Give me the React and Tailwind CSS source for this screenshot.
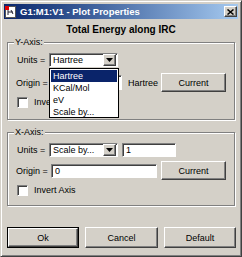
import React from 'react';

const raised =
  'bg-[#d4d0c8] border border-t-white border-l-white border-r-[#404040] border-b-[#404040] shadow-[inset_-1px_-1px_0_#808080]';
const sunken =
  'bg-white border border-t-[#808080] border-l-[#808080] border-r-white border-b-white shadow-[inset_1px_1px_0_#404040]';

const Arrow = () => (
  <div className={`${raised} shrink-0 w-[13px] h-[12px] flex items-center justify-center`}>
    <svg width="7" height="4" viewBox="0 0 7 4">
      <path d="M0 0h7L3.5 4z" fill="#000" />
    </svg>
  </div>
);

const Combo = ({ value, className = '' }) => (
  <div className={`${sunken} shrink-0 h-[14px] flex items-center justify-between pl-[3px] pr-px ${className}`}>
    <span className="leading-none whitespace-nowrap">{value}</span>
    <Arrow />
  </div>
);

const Button = ({ children, className = '' }) => (
  <div className={`${raised} shrink-0 flex items-center justify-center ${className}`}>{children}</div>
);

const Checkbox = ({ label }) => (
  <div className="flex items-center">
    <div className={`${sunken} shrink-0 w-[11px] h-[11px]`} />
    <span className="ml-[6px] whitespace-nowrap">{label}</span>
  </div>
);

const Label = ({ children, className = '' }) => (
  <span className={`shrink-0 whitespace-nowrap ${className}`}>{children}</span>
);

const Group = ({ title, className = '', children }) => (
  <div
    className={`relative shrink-0 w-[228px] ml-[3px] border border-[#808080] shadow-[inset_1px_1px_0_#fff,1px_1px_0_#fff] ${className}`}
  >
    <span className="absolute -top-[7px] left-[6px] bg-[#d4d0c8] px-px leading-[12px]">{title}</span>
    {children}
  </div>
);

const TitleIcon = () => (
  <svg width="11" height="12" viewBox="0 0 11 12" className="shrink-0">
    <rect x="0.5" y="0.5" width="10" height="11" fill="#fff" stroke="#555" />
    <path d="M3 3v6M3 6h5M6 4l2 4" stroke="#223" strokeWidth="1" fill="none" />
    <rect x="0" y="0" width="4" height="4" fill="#e00000" />
  </svg>
);

export default function App() {
  const menu = ['Hartree', 'KCal/Mol', 'eV', 'Scale by...'];

  return (
    <div className="w-[242px] h-[257px] bg-[#d4d0c8] border border-t-[#d4d0c8] border-l-[#d4d0c8] border-r-[#404040] border-b-[#404040] shadow-[inset_1px_1px_0_#fff,inset_-1px_-1px_0_#808080] p-[3px] flex flex-col font-['Liberation_Sans',Arial,sans-serif] text-[9px] leading-[12px] text-black overflow-hidden">
      {/* Title bar */}
      <div className="shrink-0 h-[15px] bg-gradient-to-r from-[#0a246a] to-[#a6caf0] flex items-center px-px">
        <TitleIcon />
        <span className="ml-[4px] text-white font-bold text-[9.5px] leading-none whitespace-nowrap">
          G1:M1:V1 - Plot Properties
        </span>
        <div className={`${raised} ml-auto w-[13px] h-[11px] flex items-center justify-center`}>
          <svg width="7" height="6" viewBox="0 0 7 6">
            <path d="M0.5 0.5l6 5M6.5 0.5l-6 5" stroke="#000" strokeWidth="1.5" />
          </svg>
        </div>
      </div>

      <div className="shrink-0 mt-[4px] text-center font-bold text-[10px] leading-[13px]">Total Energy along IRC</div>

      {/* Y axis */}
      <Group title="Y-Axis:" className="mt-[6px] h-[78px] pl-[9px] pt-[10px]">
        <div className="flex items-center">
          <Label className="w-[32px]">Units =</Label>
          <div className="relative">
            <Combo value="Hartree" className="w-[69px]" />
            <div className="absolute top-[15px] left-0 w-[70px] h-[50px] bg-white border border-black z-10 flex flex-col pt-px px-px">
              {menu.map((m, i) => (
                <div
                  key={m}
                  className={`h-[12px] pl-[2px] leading-[12px] whitespace-nowrap ${i === 0 ? 'bg-[#0a246a] text-white' : ''}`}
                >
                  {m}
                </div>
              ))}
            </div>
          </div>
        </div>
        <div className="flex items-center mt-[6px]">
          <Label className="w-[35px] -ml-px">Origin =</Label>
          <div className={`${sunken} shrink-0 w-[71px] h-[15px]`} />
          <Label className="ml-[6px] w-[33px]">Hartree</Label>
          <Button className="w-[65px] h-[19px]">Current</Button>
        </div>
        <div className="mt-[4px]">
          <Checkbox label="Invert Axis" />
        </div>
      </Group>

      {/* X axis */}
      <Group title="X-Axis:" className="mt-[12px] h-[74px] pl-[9px] pt-[10px]">
        <div className="flex items-center">
          <Label className="w-[32px]">Units =</Label>
          <Combo value="Scale by..." className="w-[69px]" />
          <div className={`${sunken} shrink-0 ml-[4px] w-[54px] h-[14px] pl-[3px] flex items-center`}>1</div>
        </div>
        <div className="flex items-center mt-[4px]">
          <Label className="w-[35px] -ml-px">Origin =</Label>
          <div className={`${sunken} shrink-0 w-[106px] h-[14px] pl-[3px] flex items-center`}>0</div>
          <Button className="ml-[4px] w-[65px] h-[19px]">Current</Button>
        </div>
        <div className="mt-[4px]">
          <Checkbox label="Invert Axis" />
        </div>
      </Group>

      {/* Buttons */}
      <div className="shrink-0 flex gap-[6px] ml-[3px] mt-[21px]">
        <div className="w-[72px] h-[21px] border border-black">
          <Button className="w-full h-full">Ok</Button>
        </div>
        <Button className="w-[73px] h-[21px]">Cancel</Button>
        <Button className="w-[72px] h-[21px]">Default</Button>
      </div>
    </div>
  );
}
